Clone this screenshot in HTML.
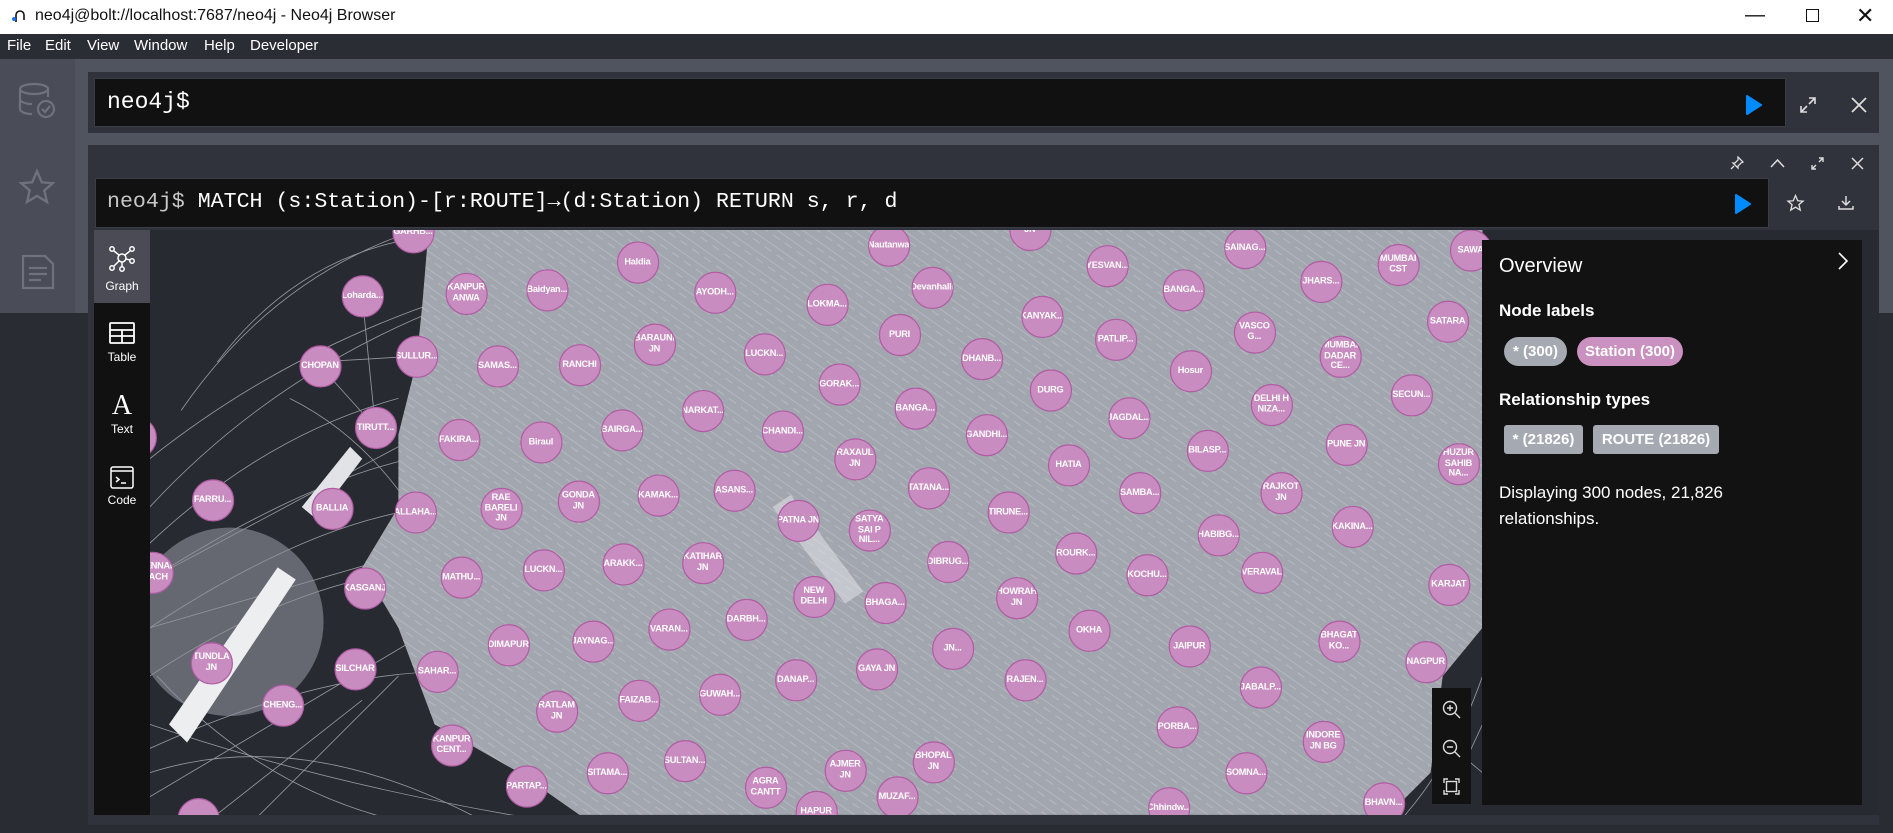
<!DOCTYPE html>
<html><head><meta charset="utf-8"><style>
*{margin:0;padding:0;box-sizing:border-box}
body{width:1893px;height:833px;overflow:hidden;background:#292c33;font-family:"Liberation Sans",sans-serif;position:relative}
.abs{position:absolute}
.title{left:0;top:0;width:1893px;height:34px;background:#fff;color:#111;font-size:16px}
.menu{left:0;top:34px;width:1893px;height:25px;background:#2b2d35;color:#fff;font-size:15px}
.menu span{position:absolute;top:3px}
.mono{font-family:"Liberation Mono",monospace}
.node{position:absolute;width:35px;height:35px;margin:-17.5px 0 0 -17.5px;border-radius:50%;background:#c98cc0;border:1.3px solid #b05ca3;color:#fff;font-size:7.6px;font-weight:bold;display:flex;align-items:center;justify-content:center;text-align:center;line-height:8.6px;overflow:hidden;white-space:nowrap;letter-spacing:-0.2px}
.tab{position:absolute;left:94px;width:56px;color:#fff;font-size:12px;text-align:center}
.pill{position:absolute;height:29px;color:#fff;font-weight:bold;font-size:15px;line-height:29px;text-align:center}
</style></head><body>
<div class="abs title">
 <svg class="abs" style="left:10px;top:8px" width="18" height="18" viewBox="0 0 18 18"><path d="M6 14 V7 a4 4 0 0 1 8 0 V12" stroke="#111" stroke-width="1.6" fill="none"/><circle cx="4" cy="11" r="2" fill="#1a73e8"/></svg>
 <span class="abs" style="left:35px;top:7px">neo4j@bolt://localhost:7687/neo4j - Neo4j Browser</span>
 <span class="abs" style="left:1745px;top:4px;font-size:20px">&#8212;</span>
 <div class="abs" style="left:1806px;top:9px;width:13px;height:13px;border:1.3px solid #111"></div>
 <span class="abs" style="left:1856px;top:3px;font-size:22px">&#10005;</span>
</div>
<div class="abs menu"><span style="left:7px">File</span><span style="left:45px">Edit</span><span style="left:87px">View</span><span style="left:134px">Window</span><span style="left:204px">Help</span><span style="left:250px">Developer</span></div>
<div class="abs" style="left:0;top:59px;width:75px;height:254px;background:#4a4c57"></div>
<div class="abs" style="left:75px;top:59px;width:1818px;height:254px;background:#50545f"></div>
<svg class="abs" style="left:17px;top:80px" width="40" height="40" viewBox="0 0 40 40" fill="none" stroke="#6f727c" stroke-width="2.2"><ellipse cx="17" cy="9" rx="14" ry="5"/><path d="M3 9v20c0 3 6 5 12 5M31 9v8M3 19c0 3 6 5 12 5"/><circle cx="29" cy="29" r="8"/><path d="M25 29l3 3 5-6"/></svg>
<svg class="abs" style="left:18px;top:168px" width="38" height="38" viewBox="0 0 24 24" fill="none" stroke="#6f727c" stroke-width="1.5"><path d="M12 2l3 7 7 .6-5.4 4.6 1.7 7.3L12 17.6 5.7 21.5l1.7-7.3L2 9.6 9 9z"/></svg>
<svg class="abs" style="left:21px;top:254px" width="34" height="36" viewBox="0 0 34 36" fill="none" stroke="#6f727c" stroke-width="2.2"><path d="M2 2h22l8 8v24H2z"/><path d="M8 14h18M8 20h18M8 26h12"/></svg>
<div class="abs" style="left:88px;top:72px;width:1791px;height:61px;background:#30333b"></div>
<div class="abs" style="left:94px;top:78px;width:1692px;height:49px;background:#111;border:1px solid #3a3d45"></div>
<span class="abs mono" style="left:107px;top:89px;font-size:23px;color:#fff">neo4j$</span>
<svg class="abs" style="left:1746px;top:95px" width="16" height="20"><path d="M1 1 L15 10 L1 19Z" fill="#018bff" stroke="#018bff" stroke-linejoin="round" stroke-width="2"/></svg>
<svg class="abs" style="left:1800px;top:97px" width="16" height="16" fill="none" stroke="#ddd" stroke-width="1.6"><path d="M9 1h6v6M15 1L9 7M7 15H1V9M1 15l6-6"/></svg>
<svg class="abs" style="left:1851px;top:97px" width="16" height="16" stroke="#ddd" stroke-width="1.8"><path d="M1 1L15 15M15 1L1 15"/></svg>
<div class="abs" style="left:88px;top:145px;width:1791px;height:680px;background:#30333b"></div>
<svg class="abs" style="left:1730px;top:156px" width="14" height="14" fill="none" stroke="#ddd" stroke-width="1.3"><path d="M8 1l5 5-2 1-3 3 0 2-5-5 2 0 3-3zM4 10L1 13"/></svg>
<svg class="abs" style="left:1770px;top:158px" width="15" height="10" fill="none" stroke="#ddd" stroke-width="1.5"><path d="M1 9l6.5-7 6.5 7"/></svg>
<svg class="abs" style="left:1811px;top:157px" width="13" height="13" fill="none" stroke="#ddd" stroke-width="1.4"><path d="M8 1h4v4M12 1L8 5M5 12H1V8M1 12l4-4"/></svg>
<svg class="abs" style="left:1851px;top:157px" width="13" height="13" stroke="#ddd" stroke-width="1.5"><path d="M1 1L12 12M12 1L1 12"/></svg>
<div class="abs" style="left:95px;top:178px;width:1674px;height:50px;background:#111;border:1px solid #3a3d45"></div>
<span class="abs mono" style="left:107px;top:190px;font-size:21.6px;color:#c8c8c8;white-space:pre">neo4j$ <span style="color:#fff">MATCH (s:Station)-[r:ROUTE]→(d:Station) RETURN s, r, d</span></span>
<svg class="abs" style="left:1735px;top:194px" width="16" height="20"><path d="M1 1 L15 10 L1 19Z" fill="#018bff" stroke="#018bff" stroke-linejoin="round" stroke-width="2"/></svg>
<svg class="abs" style="left:1786px;top:194px" width="19" height="18" viewBox="0 0 24 24" fill="none" stroke="#ddd" stroke-width="1.8"><path d="M12 2l3 7 7 .6-5.4 4.6 1.7 7.3L12 17.6 5.7 21.5l1.7-7.3L2 9.6 9 9z"/></svg>
<svg class="abs" style="left:1838px;top:195px" width="16" height="16" fill="none" stroke="#ddd" stroke-width="1.5"><path d="M8 1v9M4 6l4 4 4-4M1 11v3h14v-3"/></svg>
<div class="abs" style="left:150px;top:230px;width:1729px;height:585px;overflow:hidden;background:#272a31">
 <div class="abs" style="left:-150px;top:-230px;width:1568px;height:690px;transform:scale(1.20727);transform-origin:0 0">
  <svg class="abs" style="left:0;top:0" width="1568" height="690">
   <defs><pattern id="p" width="12" height="12" patternUnits="userSpaceOnUse" patternTransform="rotate(35)"><path d="M0 3h12M0 8h7" stroke="#e6e7ea" stroke-width="0.7" opacity="0.35"/></pattern></defs>
   <g fill="none" stroke="#b9bcc3" stroke-width="0.7" opacity="0.75">
    <path d="M150 340 Q260 180 460 170"/><path d="M124 420 Q300 230 600 200"/><path d="M124 380 Q350 200 700 195"/><path d="M180 300 Q240 220 330 200"/>
    <path d="M124 450 Q220 360 330 330"/><path d="M124 480 Q250 400 340 380"/><path d="M124 520 Q260 430 360 420"/><path d="M124 560 Q260 470 380 470"/>
    <path d="M124 600 Q300 660 520 690"/><path d="M124 640 Q250 600 400 680"/><path d="M130 560 Q260 700 450 690"/><path d="M124 620 Q300 540 430 560"/>
    <path d="M124 480 L330 370"/><path d="M124 520 L400 440"/><path d="M124 660 L360 520"/><path d="M200 690 L330 560"/><path d="M160 690 L300 580"/>
    <path d="M260 300 L345 295"/><path d="M265 303 L311 354"/><path d="M300 245 L311 354"/><path d="M240 330 Q300 360 340 420"/>
    <path d="M1228 560 Q1200 640 1150 690"/><path d="M1180 600 L1228 640"/><path d="M1200 660 L1228 600"/>
   </g>
   <circle cx="190" cy="515" r="78" fill="#8f939c" opacity="0.6"/>
   <path d="M355 190 L1228 190 L1228 520 L1195 560 L1185 640 L1150 675 L480 675 L430 640 L360 600 L330 520 L300 470 L330 420 L330 360 L345 300 L350 250Z" fill="#a2a6ae"/>
   <path d="M355 190 L1228 190 L1228 520 L1195 560 L1185 640 L1150 675 L480 675 L430 640 L360 600 L330 520 L300 470 L330 420 L330 360 L345 300 L350 250Z" fill="url(#p)"/>
   <path d="M140 600 L230 470 L245 480 L155 615Z" fill="#eceef0"/>
   <path d="M250 420 L290 370 L300 380 L262 430Z" fill="#e1e3e6"/>
   <path d="M640 420 L700 500 L715 490 L655 410Z" fill="#dcdee2" opacity="0.6"/>
  </svg>
  <div class="node" style="left:342px;top:192px">GARHB...</div>
  <div class="node" style="left:528px;top:217px">Haldia</div>
  <div class="node" style="left:736px;top:203px">Nautanwa</div>
  <div class="node" style="left:853px;top:190px">JN</div>
  <div class="node" style="left:917px;top:220px">YESVAN...</div>
  <div class="node" style="left:1031px;top:205px">SAINAG...</div>
  <div class="node" style="left:1158px;top:219px">MUMBAI<br>CST</div>
  <div class="node" style="left:1218px;top:207px">SAWA</div>
  <div class="node" style="left:386px;top:243px">KANPUR<br>ANWA</div>
  <div class="node" style="left:453px;top:240px">Baidyan...</div>
  <div class="node" style="left:592px;top:242px">AYODH...</div>
  <div class="node" style="left:685px;top:252px">LOKMA...</div>
  <div class="node" style="left:772px;top:238px">Devanhalli</div>
  <div class="node" style="left:863px;top:262px">KANYAK...</div>
  <div class="node" style="left:980px;top:240px">BANGA...</div>
  <div class="node" style="left:1094px;top:233px">JHARS...</div>
  <div class="node" style="left:1199px;top:266px">SATARA</div>
  <div class="node" style="left:300px;top:245px">Loharda...</div>
  <div class="node" style="left:265px;top:303px">CHOPAN</div>
  <div class="node" style="left:345px;top:295px">SULLUR...</div>
  <div class="node" style="left:412px;top:303px">SAMAS...</div>
  <div class="node" style="left:480px;top:302px">RANCHI</div>
  <div class="node" style="left:542px;top:285px">BARAUNI<br>JN</div>
  <div class="node" style="left:633px;top:293px">LUCKN...</div>
  <div class="node" style="left:745px;top:277px">PURI</div>
  <div class="node" style="left:813px;top:297px">DHANB...</div>
  <div class="node" style="left:924px;top:281px">PATLIP...</div>
  <div class="node" style="left:1039px;top:275px">VASCO<br>G...</div>
  <div class="node" style="left:1110px;top:295px">MUMBAI<br>DADAR<br>CE...</div>
  <div class="node" style="left:986px;top:307px">Hosur</div>
  <div class="node" style="left:695px;top:318px">GORAK...</div>
  <div class="node" style="left:870px;top:323px">DURG</div>
  <div class="node" style="left:1053px;top:335px">DELHI H<br>NIZA...</div>
  <div class="node" style="left:1169px;top:327px">SECUN...</div>
  <div class="node" style="left:758px;top:338px">BANGA...</div>
  <div class="node" style="left:935px;top:346px">JAGDAL...</div>
  <div class="node" style="left:582px;top:340px">NARKAT...</div>
  <div class="node" style="left:311px;top:354px">TIRUTT...</div>
  <div class="node" style="left:380px;top:364px">FAKIRA...</div>
  <div class="node" style="left:448px;top:366px">Biraul</div>
  <div class="node" style="left:515px;top:356px">BAIRGA...</div>
  <div class="node" style="left:648px;top:357px">CHANDI...</div>
  <div class="node" style="left:817px;top:360px">GANDHI...</div>
  <div class="node" style="left:1000px;top:373px">BILASP...</div>
  <div class="node" style="left:1115px;top:368px">PUNE JN</div>
  <div class="node" style="left:885px;top:385px">HATIA</div>
  <div class="node" style="left:708px;top:380px">RAXAUL<br>JN</div>
  <div class="node" style="left:769px;top:404px">TATANA...</div>
  <div class="node" style="left:1208px;top:384px">HUZUR<br>SAHIB<br>NA...</div>
  <div class="node" style="left:112px;top:362px">G...</div>
  <div class="node" style="left:176px;top:414px">FARRU...</div>
  <div class="node" style="left:275px;top:421px">BALLIA</div>
  <div class="node" style="left:344px;top:424px">ALLAHA...</div>
  <div class="node" style="left:415px;top:421px">RAE<br>BARELI<br>JN</div>
  <div class="node" style="left:479px;top:415px">GONDA<br>JN</div>
  <div class="node" style="left:545px;top:410px">KAMAK...</div>
  <div class="node" style="left:608px;top:406px">ASANS...</div>
  <div class="node" style="left:661px;top:431px">PATNA JN</div>
  <div class="node" style="left:944px;top:408px">SAMBA...</div>
  <div class="node" style="left:1061px;top:408px">RAJKOT<br>JN</div>
  <div class="node" style="left:720px;top:439px">SATYA<br>SAI P<br>NIL...</div>
  <div class="node" style="left:835px;top:424px">TIRUNE...</div>
  <div class="node" style="left:1009px;top:443px">HABIBG...</div>
  <div class="node" style="left:1120px;top:436px">KAKINA...</div>
  <div class="node" style="left:126px;top:474px">CHENNAI<br>BEACH</div>
  <div class="node" style="left:302px;top:487px">KASGANJ</div>
  <div class="node" style="left:382px;top:478px">MATHU...</div>
  <div class="node" style="left:450px;top:472px">LUCKN...</div>
  <div class="node" style="left:516px;top:467px">ARAKK...</div>
  <div class="node" style="left:582px;top:466px">KATIHAR<br>JN</div>
  <div class="node" style="left:785px;top:465px">DIBRUG...</div>
  <div class="node" style="left:891px;top:458px">ROURK...</div>
  <div class="node" style="left:950px;top:476px">KOCHU...</div>
  <div class="node" style="left:674px;top:494px">NEW<br>DELHI</div>
  <div class="node" style="left:733px;top:499px">BHAGA...</div>
  <div class="node" style="left:842px;top:495px">HOWRAH<br>JN</div>
  <div class="node" style="left:1045px;top:474px">VERAVAL</div>
  <div class="node" style="left:1200px;top:484px">KARJAT</div>
  <div class="node" style="left:175px;top:549px">TUNDLA<br>JN</div>
  <div class="node" style="left:294px;top:554px">SILCHAR</div>
  <div class="node" style="left:362px;top:556px">SAHAR...</div>
  <div class="node" style="left:421px;top:534px">DIMAPUR</div>
  <div class="node" style="left:491px;top:531px">JAYNAG...</div>
  <div class="node" style="left:554px;top:521px">VARAN...</div>
  <div class="node" style="left:618px;top:513px">DARBH...</div>
  <div class="node" style="left:789px;top:537px">JN...</div>
  <div class="node" style="left:902px;top:522px">OKHA</div>
  <div class="node" style="left:985px;top:535px">JAIPUR</div>
  <div class="node" style="left:1109px;top:531px">BHAGAT<br>KO...</div>
  <div class="node" style="left:1181px;top:548px">NAGPUR</div>
  <div class="node" style="left:234px;top:584px">CHENG...</div>
  <div class="node" style="left:596px;top:575px">GUWAH...</div>
  <div class="node" style="left:726px;top:554px">GAYA JN</div>
  <div class="node" style="left:659px;top:563px">DANAP...</div>
  <div class="node" style="left:849px;top:563px">RAJEN...</div>
  <div class="node" style="left:1044px;top:569px">JABALP...</div>
  <div class="node" style="left:461px;top:589px">RATLAM<br>JN</div>
  <div class="node" style="left:529px;top:580px">FAIZAB...</div>
  <div class="node" style="left:374px;top:617px">KANPUR<br>CENT...</div>
  <div class="node" style="left:700px;top:638px">AJMER<br>JN</div>
  <div class="node" style="left:773px;top:631px">BHOPAL<br>JN</div>
  <div class="node" style="left:634px;top:652px">AGRA<br>CANTT</div>
  <div class="node" style="left:567px;top:630px">SULTAN...</div>
  <div class="node" style="left:503px;top:640px">SITAMA...</div>
  <div class="node" style="left:975px;top:602px">PORBA...</div>
  <div class="node" style="left:1096px;top:614px">INDORE<br>JN BG</div>
  <div class="node" style="left:1032px;top:640px">SOMNA...</div>
  <div class="node" style="left:436px;top:651px">PARTAP...</div>
  <div class="node" style="left:743px;top:660px">MUZAF...</div>
  <div class="node" style="left:968px;top:669px">Chhindw...</div>
  <div class="node" style="left:1146px;top:665px">BHAVN...</div>
  <div class="node" style="left:164px;top:678px"></div>
  <div class="node" style="left:676px;top:672px">HAPUR</div>
 </div>
</div>
<div class="abs" style="left:94px;top:230px;width:56px;height:585px;background:#111"></div>
<div class="abs" style="left:94px;top:230px;width:56px;height:73px;background:#4a4b55"></div>
<svg class="abs" style="left:108px;top:246px" width="28" height="26" fill="none" stroke="#fff" stroke-width="1.5"><circle cx="14" cy="12" r="4"/><circle cx="4" cy="3" r="2.2"/><circle cx="24" cy="3" r="2.2"/><circle cx="4" cy="22" r="2.2"/><circle cx="14" cy="23" r="2.2"/><circle cx="24" cy="15" r="2.2"/><path d="M6 5l5 4M22 5l-5 4M6 20l5-5M14 16v5M22 14l-4-1"/></svg>
<div class="tab" style="top:279px">Graph</div>
<svg class="abs" style="left:109px;top:322px" width="26" height="22" fill="none" stroke="#fff" stroke-width="1.8"><rect x="1" y="1" width="24" height="20" rx="1"/><path d="M1 8h24M1 14h24M13 8v13"/></svg>
<div class="tab" style="top:350px">Table</div>
<div class="tab" style="top:390px;font-family:'Liberation Serif',serif;font-size:28px">A</div>
<div class="tab" style="top:422px">Text</div>
<svg class="abs" style="left:110px;top:466px" width="24" height="23" fill="none" stroke="#fff" stroke-width="1.5"><rect x="1" y="1" width="22" height="21" rx="2"/><path d="M1 5h22M6 11l3 2.5-3 2.5M11 17h5"/></svg>
<div class="tab" style="top:493px">Code</div>
<div class="abs" style="left:1432px;top:688px;width:39px;height:116px;background:#121212"></div>
<svg class="abs" style="left:1442px;top:700px" width="20" height="20" fill="none" stroke="#ddd" stroke-width="1.4"><circle cx="8" cy="8" r="6.5"/><path d="M13 13l5 5M5 8h6M8 5v6"/></svg>
<svg class="abs" style="left:1442px;top:739px" width="20" height="20" fill="none" stroke="#ddd" stroke-width="1.4"><circle cx="8" cy="8" r="6.5"/><path d="M13 13l5 5M5 8h6"/></svg>
<svg class="abs" style="left:1443px;top:778px" width="17" height="17" fill="none" stroke="#ddd" stroke-width="1.4"><rect x="3.5" y="3.5" width="10" height="10"/><path d="M1 5V1h4M12 1h4v4M16 12v4h-4M5 16H1v-4"/></svg>
<div class="abs" style="left:1482px;top:240px;width:380px;height:565px;background:#121212;color:#fff">
 <svg class="abs" style="left:355px;top:12px" width="12" height="18" fill="none" stroke="#fff" stroke-width="1.6"><path d="M2 1l8 8-8 8"/></svg>
 <div class="abs" style="left:17px;top:15px;font-size:20px">Overview</div>
 <div class="abs" style="left:17px;top:61px;font-size:17px;font-weight:bold">Node labels</div>
 <div class="pill" style="left:22px;top:97px;width:63px;border-radius:15px;background:#a5a9b2">* (300)</div>
 <div class="pill" style="left:95px;top:97px;width:106px;border-radius:15px;background:#c990c0">Station (300)</div>
 <div class="abs" style="left:17px;top:150px;font-size:17px;font-weight:bold">Relationship types</div>
 <div class="pill" style="left:22px;top:185px;width:79px;border-radius:3px;background:#a5a9b2">* (21826)</div>
 <div class="pill" style="left:111px;top:185px;width:126px;border-radius:3px;background:#a5a9b2">ROUTE (21826)</div>
 <div class="abs" style="left:17px;top:240px;font-size:17px;line-height:26px">Displaying 300 nodes, 21,826<br>relationships.</div>
</div>
</body></html>
